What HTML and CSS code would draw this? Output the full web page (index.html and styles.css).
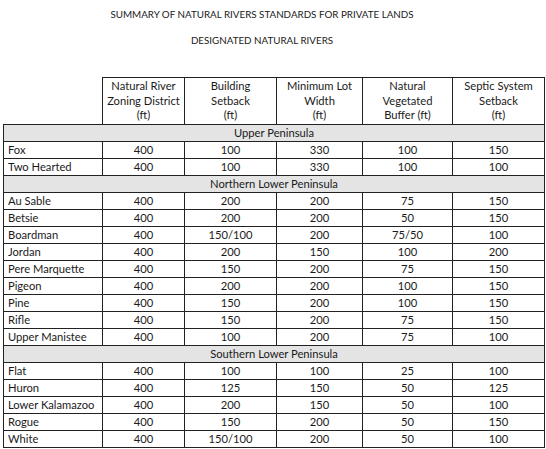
FILE: index.html
```html
<!DOCTYPE html>
<html>
<head>
<meta charset="utf-8">
<link rel="stylesheet" href="styles.css">
</head>
<body>
<div class="titles">
  <p class="title">SUMMARY OF NATURAL RIVERS STANDARDS FOR PRIVATE LANDS</p>
  <p class="title">DESIGNATED NATURAL RIVERS</p>
</div>
<table class="rivers">
  <colgroup>
    <col class="c-name"><col class="c-zone"><col class="c-build"><col class="c-lot"><col class="c-buf"><col class="c-sep">
  </colgroup>
  <thead>
    <tr class="head">
      <th class="blank"></th>
      <th>Natural River<br>Zoning District<br>(ft)</th>
      <th>Building<br>Setback<br>(ft)</th>
      <th>Minimum Lot<br>Width<br>(ft)</th>
      <th>Natural<br>Vegetated<br>Buffer (ft)</th>
      <th>Septic System<br>Setback<br>(ft)</th>
    </tr>
  </thead>
  <tbody>
    <tr class="section"><td colspan="6">Upper Peninsula</td></tr>
    <tr><td>Fox</td><td>400</td><td>100</td><td>330</td><td>100</td><td>150</td></tr>
    <tr><td>Two Hearted</td><td>400</td><td>100</td><td>330</td><td>100</td><td>100</td></tr>
    <tr class="section"><td colspan="6">Northern Lower Peninsula</td></tr>
    <tr><td>Au Sable</td><td>400</td><td>200</td><td>200</td><td>75</td><td>150</td></tr>
    <tr><td>Betsie</td><td>400</td><td>200</td><td>200</td><td>50</td><td>150</td></tr>
    <tr><td>Boardman</td><td>400</td><td>150/100</td><td>200</td><td>75/50</td><td>100</td></tr>
    <tr><td>Jordan</td><td>400</td><td>200</td><td>150</td><td>100</td><td>200</td></tr>
    <tr><td>Pere Marquette</td><td>400</td><td>150</td><td>200</td><td>75</td><td>150</td></tr>
    <tr><td>Pigeon</td><td>400</td><td>200</td><td>200</td><td>100</td><td>150</td></tr>
    <tr><td>Pine</td><td>400</td><td>150</td><td>200</td><td>100</td><td>150</td></tr>
    <tr><td>Rifle</td><td>400</td><td>150</td><td>200</td><td>75</td><td>150</td></tr>
    <tr><td>Upper Manistee</td><td>400</td><td>100</td><td>200</td><td>75</td><td>100</td></tr>
    <tr class="section"><td colspan="6">Southern Lower Peninsula</td></tr>
    <tr><td>Flat</td><td>400</td><td>100</td><td>100</td><td>25</td><td>100</td></tr>
    <tr><td>Huron</td><td>400</td><td>125</td><td>150</td><td>50</td><td>125</td></tr>
    <tr><td>Lower Kalamazoo</td><td>400</td><td>200</td><td>150</td><td>50</td><td>100</td></tr>
    <tr><td>Rogue</td><td>400</td><td>150</td><td>200</td><td>50</td><td>150</td></tr>
    <tr><td>White</td><td>400</td><td>150/100</td><td>200</td><td>50</td><td>100</td></tr>
  </tbody>
</table>
</body>
</html>
```
FILE: styles.css
```css
html, body {
  margin: 0;
  padding: 0;
  background: #ffffff;
}
body {
  font-family: "Lato", "Open Sans", "Liberation Sans", sans-serif;
  font-size: 11.2px;
  color: #1a1a1a;
}
.titles {
  padding-right: 22px;
  padding-top: 8px;
  height: 77px;
  box-sizing: border-box;
}
.title {
  margin: 0 0 13px 0;
  text-align: center;
  line-height: 13px;
  font-size: 9.8px;
}
.rivers {
  margin-left: 3px;
  border-collapse: collapse;
  table-layout: fixed;
  width: 542px;
}
.c-name { width: 99px; }
.c-zone { width: 82px; }
.c-build { width: 92px; }
.c-lot { width: 86px; }
.c-buf { width: 90px; }
.c-sep { width: 92px; }
.rivers th, .rivers td {
  border: 1px solid #222;
  padding: 0;
  text-align: center;
  font-weight: normal;
  line-height: 14px;
  white-space: nowrap;
}
.rivers th.blank {
  border-left: none;
  border-top: none;
}
.head th {
  height: 46px;
  line-height: 14.5px;
  vertical-align: middle;
}
.rivers tbody tr {
  height: 17px;
}
.rivers tbody td:first-child {
  text-align: left;
  padding-left: 4px;
}
.rivers tr.section td {
  background: #e4e4e4;
  text-align: center;
  padding-left: 0;
}
```
